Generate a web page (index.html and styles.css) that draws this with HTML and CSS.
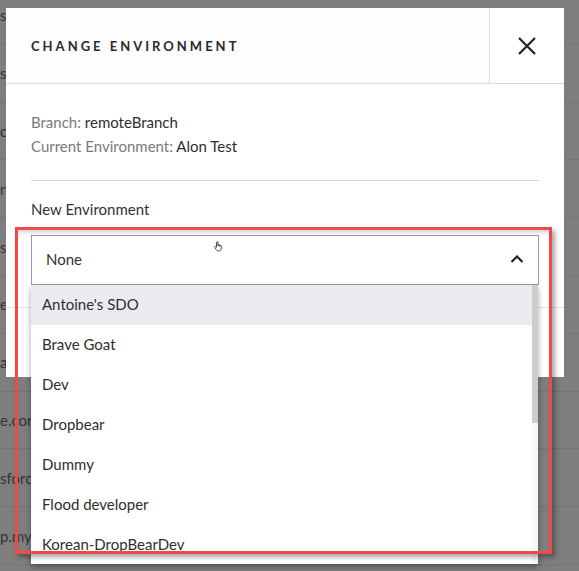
FILE: index.html
```html
<!DOCTYPE html>
<html lang="en">
<head>
  <meta charset="UTF-8" />
  <meta name="viewport" content="width=device-width, initial-scale=1.0"/>
  <title>Change Environment</title>
  <link rel="stylesheet" href="styles.css">
</head>
<body>
  <!-- page behind the dialog -->
  <div class="page">
    <div class="row">s</div>
    <div class="row">s</div>
    <div class="row">or</div>
    <div class="row">n</div>
    <div class="row">s</div>
    <div class="row">es</div>
    <div class="row">a</div>
    <div class="row">e.cor</div>
    <div class="row">sforc</div>
    <div class="row">p.my</div>
  </div>

  <div class="modal">
    <div class="modal-header">
      <h3 class="modal-title">Change Environment</h3>
      <button class="close" aria-label="Close">
        <svg width="18" height="18" viewBox="0 0 18 18">
          <path d="M1 1 L17 17 M17 1 L1 17" stroke="#222" stroke-width="2.2" fill="none"/>
        </svg>
      </button>
    </div>

    <div class="modal-body">
      <p class="info"><span class="label">Branch:</span> remoteBranch</p>
      <p class="info"><span class="label">Current Environment:</span> Alon Test</p>
      <hr class="divider">

      <div class="field-label">New Environment</div>
      <div class="select">
        <div class="select-box">
          <span>None</span>
          <svg class="chevron" width="14" height="8" viewBox="0 0 14 8">
            <path d="M1.5 7 L7 1.5 L12.5 7" stroke="#222" stroke-width="2.2" fill="none"/>
          </svg>
        </div>
        <div class="dropdown">
          <ul class="options">
            <li class="active">Antoine's SDO</li>
            <li>Brave Goat</li>
            <li>Dev</li>
            <li>Dropbear</li>
            <li>Dummy</li>
            <li>Flood developer</li>
            <li>Korean-DropBearDev</li>
          </ul>
          <div class="scrollbar"><div class="thumb"></div></div>
        </div>
        <svg class="pointer" width="9" height="11" viewBox="0 0 9 11">
          <path d="M2.5 6 V1.5 a0.8 0.8 0 0 1 1.6 0 V5 M4.1 4.5 a0.8 0.8 0 0 1 1.6 0 V5.5 M5.7 5 a0.8 0.8 0 0 1 1.6 0 V7 c0 2-1 3-2.6 3 H4.3 c-1 0-1.6-0.5-2.1-1.3 L0.8 6.6 a0.7 0.7 0 0 1 1.2-0.8 L2.5 6.5" stroke="#333" stroke-width="0.9" fill="#fff"/>
        </svg>
      </div>
    </div>

    <div class="modal-footer"></div>
  </div>

  <div class="highlight"></div>
</body>
</html>
```

FILE: styles.css
```css
body {
  margin: 0;
  height: 571px;
  overflow: hidden;
  background: #7e7e7e;
  font-family: Lato, "Open Sans", sans-serif;
  color: #333;
  position: relative;
}

/* Background list */
.page {
  margin-top: -13px;
}

.row {
  height: 57.8px;
  box-sizing: border-box;
  border-bottom: 1px solid #747474;
  display: flex;
  align-items: center;
  font-size: 15px;
  color: #353535;
  white-space: nowrap;
}

/* Dialog */
.modal {
  position: absolute;
  left: 6px;
  top: 8px;
  width: 558px;
  background: #fff;
}

.modal-header {
  display: flex;
  height: 75px;
  border-bottom: 1px solid #dcdcdc;
  background: #fdfdfd;
}

.modal-title {
  flex: 1;
  margin: 0;
  padding-left: 25px;
  display: flex;
  align-items: center;
  font-size: 13px;
  font-weight: 700;
  letter-spacing: 3px;
  text-transform: uppercase;
  color: #2a2a2a;
}

.close {
  width: 75px;
  border: none;
  border-left: 1px solid #dcdcdc;
  background: #fff;
  display: flex;
  align-items: center;
  justify-content: center;
  padding: 0;
  cursor: pointer;
}

.modal-body {
  padding: 26px 25px 0;
}

.info {
  margin: 0;
  font-size: 15px;
  line-height: 24px;
  color: #2e2e2e;
}

.label {
  color: #7a7a7a;
}

.divider {
  border: none;
  border-top: 1px solid #dadada;
  margin: 22px 0 16px;
}

.field-label {
  font-size: 15px;
  line-height: 24px;
  color: #333;
  margin-bottom: 14px;
}

.select {
  position: relative;
}

.select-box {
  height: 50px;
  box-sizing: border-box;
  border: 1px solid #9a9a9a;
  display: flex;
  align-items: center;
  justify-content: space-between;
  padding: 0 14px 3px 14px;
  font-size: 15px;
  color: #333;
}

/* Open option list */
.dropdown {
  position: absolute;
  top: 50px;
  left: 0;
  width: 507px;
  height: 279px;
  display: flex;
  background: #fff;
  box-shadow: 0 3px 6px rgba(0, 0, 0, 0.35);
  z-index: 2;
}

.options {
  flex: 1;
  margin: 0;
  padding: 0;
  list-style: none;
  overflow: hidden;
}

.options li {
  height: 40px;
  line-height: 38px;
  padding-left: 11px;
  font-size: 15px;
  color: #2e2e2e;
  white-space: nowrap;
}

.options li.active {
  background: #ebebef;
}

.scrollbar {
  width: 6px;
  background: #f7f7f7;
}

.thumb {
  height: 138px;
  background: #cdcdcd;
}

.pointer {
  position: absolute;
  left: 183px;
  top: 6px;
}

.modal-footer {
  margin-top: 22px;
  height: 69px;
  border-top: 1px solid #e2e2e2;
}

/* Red callout frame */
.highlight {
  position: absolute;
  left: 15px;
  top: 227px;
  width: 537px;
  height: 327px;
  box-sizing: border-box;
  border: 3px solid #f34848;
  box-shadow: 3px 3px 5px rgba(0, 0, 0, 0.35), inset 0 5px 5px -3px rgba(0, 0, 0, 0.2);
  z-index: 5;
  pointer-events: none;
}
```
